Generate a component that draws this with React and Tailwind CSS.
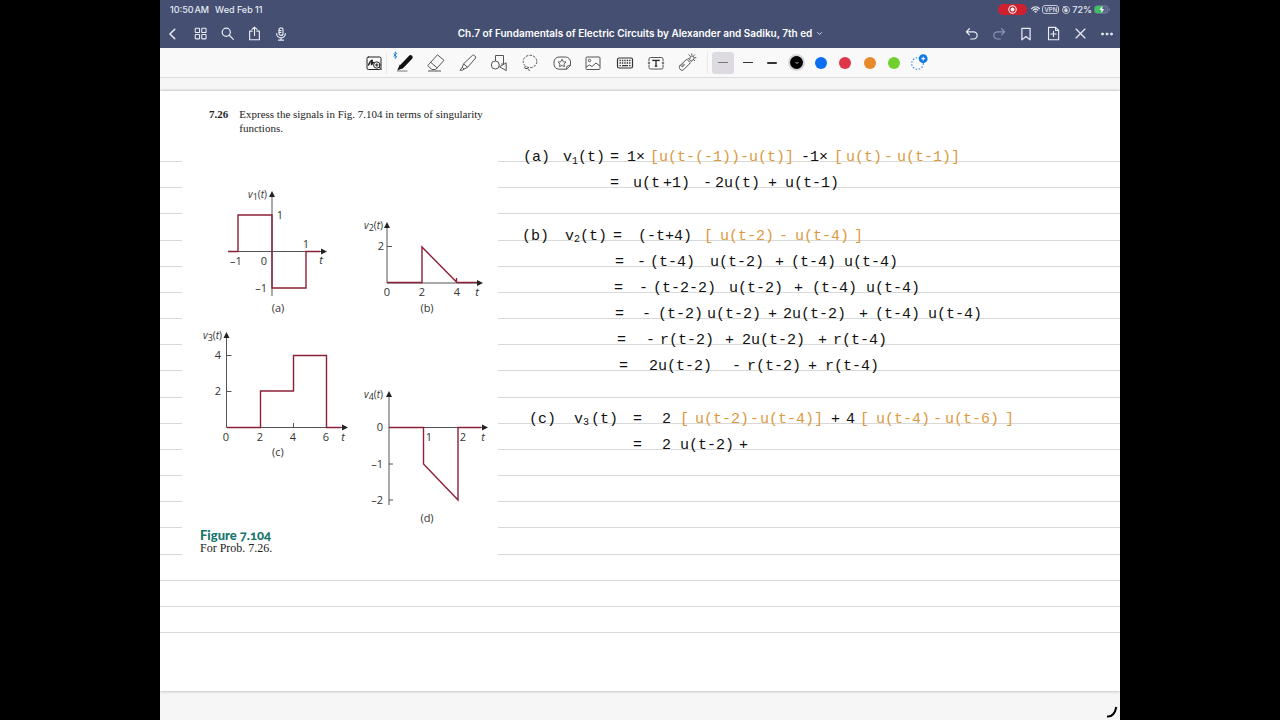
import React from "react";

const TITLE = "Ch.7 of Fundamentals of Electric Circuits by Alexander and Sadiku, 7th ed";

/* Ink tokens: [start, text, tone, subscript, rest]. Starts are measured from the left edge of the ink area. */
const O = "orange";
const ROWS = [
  [[2, "(a)"], [42, "v", "", "1", "(t)"], [89, "="], [106, "1×"], [129, "[u(t-(-1))-u(t)]", O], [280, "-1×"], [313, "[", O], [325, "u(t)", O], [363, "-", O], [376, "u(t-1)]", O]],
  [[89, "="], [112, "u(t"], [142, "+1)"], [182, "-"], [194, "2u(t)"], [247, "+"], [264, "u(t-1)"]],
  [],
  [[1, "(b)"], [44, "v", "", "2", "(t)"], [92, "="], [117, "(-t+4)"], [183, "[", O], [199, "u(t-2)", O], [258, "-", O], [274, "u(t-4)", O], [333, "]", O]],
  [[94, "="], [116, "-"], [129, "(t-4)"], [189, "u(t-2)"], [254, "+"], [270, "(t-4)"], [323, "u(t-4)"]],
  [[93, "="], [118, "-"], [132, "(t-2-2)"], [208, "u(t-2)"], [273, "+"], [291, "(t-4)"], [345, "u(t-4)"]],
  [[94, "="], [121, "-"], [137, "(t-2)"], [186, "u(t-2)"], [247, "+"], [262, "2u(t-2)"], [338, "+"], [354, "(t-4)"], [407, "u(t-4)"]],
  [[96, "="], [125, "-"], [139, "r(t-2)"], [204, "+"], [221, "2u(t-2)"], [297, "+"], [312, "r(t-4)"]],
  [[98, "="], [128, "2u(t-2)"], [211, "-"], [226, "r(t-2)"], [287, "+"], [304, "r(t-4)"]],
  [],
  [[8, "(c)"], [53, "v", "", "3"], [70, "(t)"], [112, "="], [141, "2"], [159, "[", O], [174, "u(t-2)", O], [229, "-", O], [239, "u(t-4)]", O], [310, "+"], [325, "4"], [339, "[", O], [355, "u(t-4)", O], [412, "-", O], [424, "u(t-6)", O], [484, "]", O]],
  [[112, "="], [141, "2"], [159, "u(t-2)"], [218, "+"]],
  [], [], [], [], [], [], [],
];

function InkRow({ tokens }) {
  return (
    <li className="flex min-h-0 flex-1 items-end whitespace-pre border-b border-[#d9d9d9] pl-[361px] font-['Liberation_Mono',monospace] text-[15px] leading-[6px] text-[#111]">
      {tokens.map(([x, text, tone, sub, rest], i) => {
        const start = i === 0 ? x : 0;
        const next = tokens[i + 1];
        return (
          <span
            key={i}
            className={tone === O ? "shrink-0 text-[#dc9a3e]" : "shrink-0"}
            style={{ marginLeft: start, width: next ? next[0] - x : undefined }}
          >
            {text}
            {sub && <sub className="text-[10px] leading-[0px]">{sub}</sub>}
            {rest}
          </span>
        );
      })}
    </li>
  );
}

function Svg({ size = 16, children, sw = 1.2, className }) {
  return (
    <svg width={size} height={size} viewBox="0 0 16 16" fill="none" stroke="currentColor" strokeWidth={sw} strokeLinecap="round" strokeLinejoin="round" className={className} aria-hidden="true">
      {children}
    </svg>
  );
}

function NavButton({ label, children }) {
  return (
    <button aria-label={label} className="flex h-6 w-[26px] items-center justify-center">
      {children}
    </button>
  );
}

function StatusBar() {
  return (
    <div className="flex h-[19px] items-center justify-between pr-[9px] pl-[10px] font-[Inter,sans-serif] text-[9px] font-medium text-[#e6e9f2]">
      <div className="flex gap-[6px]">
        <span>10:50{"\u200a"}AM</span>
        <span>Wed Feb 11</span>
      </div>
      <div className="flex items-center gap-[2px]">
        <span className="mr-[2px] flex h-[11px] w-[29px] items-center justify-center rounded-full bg-[#d0202f] text-white">
          <Svg size={9} sw={1.8}><circle cx="8" cy="8" r="6.6" /><circle cx="8" cy="8" r="2.6" fill="currentColor" /></Svg>
        </span>
        <Svg size={9} sw={2.2}>
          <path d="M1.2 6.2a10 10 0 0 1 13.6 0M3.8 9.2a6 6 0 0 1 8.4 0" />
          <path d="M8 13.5 6.2 11.6a2.7 2.7 0 0 1 3.6 0Z" fill="currentColor" strokeWidth="1" />
        </Svg>
        <span className="flex h-[9px] w-[17px] items-center justify-center rounded-[3px] border border-[#c3c8d8] text-[6px] leading-none font-medium">VPN</span>
        <Svg size={8} sw={1.6} className="ml-px">
          <path d="M3 3.2A7 7 0 1 0 8 1c-1.500 0-2.800.4-4 1.200M3.700 0v3.400H7" />
          <rect x="5.200" y="7.200" width="5.600" height="4.200" rx=".8" fill="currentColor" strokeWidth=".6" />
          <path d="M6.300 7V6a1.700 1.700 0 0 1 3.400 0v1" strokeWidth="1.200" />
        </Svg>
        <span>72%</span>
        <svg width="17" height="9" viewBox="0 0 17 9" aria-hidden="true">
          <rect x=".5" y=".8" width="13.500" height="7.400" rx="2.400" fill="#59648a" stroke="#8790ab" strokeWidth=".6" />
          <path d="M3 1h6v7H3a2 2 0 0 1-2-2V3a2 2 0 0 1 2-2Z" fill="#35c75a" />
          <path d="M8.800.3 4.800 5h2.500l-.9 3.700L10.600 4H8Z" fill="#fff" stroke="#454f72" strokeWidth=".3" />
          <path d="M15 3.200v2.600a1.400 1.400 0 0 0 0-2.600Z" fill="#8790ab" />
        </svg>
      </div>
    </div>
  );
}

function NavBar() {
  return (
    <nav className="flex h-[29px] items-center text-[#e9ecf5]">
      <div className="flex flex-1 gap-px">
        <NavButton label="Back"><Svg size={14} sw={1.7}><path d="M10 2.500 4.500 8l5.500 5.500" /></Svg></NavButton>
        <NavButton label="Pages">
          <Svg size={13} sw={1.3}><rect x="1.500" y="1.500" width="5.300" height="5.300" rx=".8" /><rect x="9.500" y="1.500" width="5.300" height="5.300" rx=".8" /><rect x="1.500" y="9.300" width="5.300" height="5.300" rx=".8" /><rect x="9.500" y="9.300" width="5.300" height="5.300" rx=".8" /></Svg>
        </NavButton>
        <NavButton label="Search"><Svg size={13} sw={1.5}><circle cx="6.500" cy="6.500" r="5" /><path d="m10.200 10.200 5 5" /></Svg></NavButton>
        <NavButton label="Share"><Svg size={15} sw={1.2}><path d="M5.500 5.500H2.800v9.200h10.400V5.500h-2.700M8 10V1.200M5.300 3.700 8 1.100l2.700 2.600" /></Svg></NavButton>
        <NavButton label="Record"><Svg size={14} sw={1.3}><rect x="5.700" y="1" width="4.600" height="8.600" rx="2.300" /><path d="M3 7.500a5 5 0 0 0 10 0M8 12.500V15M5.200 15h5.600M6 4h2M6 6.200h2" /></Svg></NavButton>
      </div>
      <button className="flex items-center gap-[5px] font-[Inter,sans-serif] text-[10px] font-semibold whitespace-nowrap text-white">
        {TITLE}
        <Svg size={5} sw={2.500}><path d="m2 5 6 6 6-6" /></Svg>
      </button>
      <div className="flex flex-1 justify-end gap-px">
        <NavButton label="Undo"><Svg size={14} sw={1.400}><path d="M5 2 1.600 5.500 5 9M1.800 5.500h8a4 4 0 0 1 0 8.200H6.500" /></Svg></NavButton>
        <NavButton label="Redo"><Svg size={14} sw={1.400} className="text-[#8d95b1]"><path d="M11 2l3.400 3.500L11 9M14.200 5.500h-8a4 4 0 0 0 0 8.200h3.300" /></Svg></NavButton>
        <NavButton label="Bookmark"><Svg size={14} sw={1.400}><path d="M3.300 1.500h9.400v13.200L8 10.800l-4.700 3.900Z" /></Svg></NavButton>
        <NavButton label="Add page"><Svg size={15} sw={1.200}><path d="M2.700 1.500h7.500l3.300 3.300v9.900H2.700ZM10.200 1.500v3.300h3.300M8 5.700v5.600M5.200 8.500h5.600" /></Svg></NavButton>
        <NavButton label="Close tools"><Svg size={13} sw={1.500}><path d="m2.500 2.500 11 11M13.500 2.500l-11 11" /></Svg></NavButton>
        <NavButton label="More"><Svg size={12} sw={1}><g fill="currentColor"><circle cx="2" cy="8" r="1.400" /><circle cx="8" cy="8" r="1.400" /><circle cx="14" cy="8" r="1.400" /></g></Svg></NavButton>
      </div>
    </nav>
  );
}

const TOOLS = [
  ["Pen", (
    <svg width="24" height="24" viewBox="0 0 24 24" fill="none" aria-hidden="true">
      <path d="m17.600 6.200-8.600 9" stroke="#111" strokeWidth="4.200" strokeLinecap="round" />
      <path d="m6.800 13.500 3.500 3.500-6 2.500Z" fill="#111" />
      <path d="M4 20h10.500" stroke="#777" />
      <path d="m.6 2.800 3.200 3-1.600 1.600V.9l1.600 1.500-3.200 3" stroke="#2585d8" strokeWidth="1" />
    </svg>
  )],
  ["Eraser", (
    <svg width="20" height="20" viewBox="0 0 20 20" fill="none" stroke="#555" strokeLinejoin="round" aria-hidden="true">
      <path d="M11.500 1.800 18 7.300l-8.300 9.200H6L1.700 12.600Z" /><path d="m4.700 9.300 6.500 5.600M2 18h13" />
    </svg>
  )],
  ["Highlighter", (
    <svg width="20" height="20" viewBox="0 0 20 20" fill="none" stroke="#555" strokeLinejoin="round" aria-hidden="true">
      <path d="M14.500 2.300c1.300-.8 3.800 1.300 3.100 2.700l-8 9.300-4-3.500ZM5.600 10.800l-1.400 3.500 1.900 1.700 3.500-1.700M4.200 14.300 2 17.300l2.600-.1 1.500-1.200" />
    </svg>
  )],
  ["Shapes", (
    <svg width="20" height="20" viewBox="0 0 20 20" fill="none" stroke="#555" strokeLinejoin="round" aria-hidden="true">
      <path d="M6.500 8V2.500h8V11h-2.300" /><circle cx="6.300" cy="12" r="4" /><path d="m10.500 13.800 6.700-4v7.800Z" />
    </svg>
  )],
  ["Lasso", (
    <svg width="20" height="20" viewBox="0 0 20 20" fill="none" stroke="#555" aria-hidden="true">
      <ellipse cx="10" cy="8.500" rx="6.800" ry="6.200" strokeDasharray="2.500 1.200" /><path d="M5.500 13.200c-1.500 1-1 2.500.5 2.300s3 .3 3.500 2.500" />
    </svg>
  )],
  ["Elements", (
    <svg width="20" height="20" viewBox="0 0 20 20" fill="none" stroke="#555" strokeLinejoin="round" aria-hidden="true">
      <path d="M7 4h6.500a5 5 0 0 1 5 5v3.500L14.500 16.200H7a5 5 0 0 1-5-5V9a5 5 0 0 1 5-5ZM18.500 12.300c-3.300 0-4.200 1-4 3.900" />
      <path d="m10 6.200 1.200 2.500 2.800.4-2 1.900.5 2.700-2.500-1.300-2.500 1.300.5-2.700-2-1.900 2.800-.4Z" strokeWidth=".9" />
    </svg>
  )],
  ["Image", (
    <svg width="18" height="18" viewBox="0 0 18 18" fill="none" stroke="#555" strokeLinejoin="round" aria-hidden="true">
      <rect x="2" y="3" width="14" height="12.500" rx="1" /><circle cx="5.500" cy="6.500" r="1.200" /><path d="m2 13 3.500-2 2.500 1.500 4-3.500 4 3" />
    </svg>
  )],
  ["Keyboard", (
    <svg width="18" height="18" viewBox="0 0 18 18" fill="none" stroke="#333" aria-hidden="true">
      <rect x="1.500" y="4" width="15" height="10" rx="1.500" strokeWidth="1.200" /><path d="M3.500 6.500h11M3.500 9h11" strokeWidth="1.400" strokeDasharray="1.400 1" /><path d="M3.500 11.600h1.400M6 11.600h6M13.100 11.600h1.400" strokeWidth="1.400" />
    </svg>
  )],
  ["Text", (
    <svg width="18" height="18" viewBox="0 0 18 18" fill="none" stroke="#555" aria-hidden="true">
      <path d="M2 7V5a1.500 1.500 0 0 1 1.500-1.500h11A1.500 1.500 0 0 1 16 5v2M2 11v2.500A1.500 1.500 0 0 0 3.500 15h11a1.500 1.500 0 0 0 1.500-1.500V11M2 7.500v3M16 7.500v3M.8 9h2.400M14.800 9h2.400" />
      <path d="M6 7.300V6.300h6v1M9 6.300v5.900M7.700 12.200h2.600" stroke="#222" strokeWidth="1.300" />
    </svg>
  )],
  ["Laser pointer", (
    <svg width="20" height="20" viewBox="0 0 20 20" fill="none" stroke="#555" strokeLinecap="round" strokeLinejoin="round" aria-hidden="true">
      <path d="m3 12.500 6.800-6.300 3.600 3.600-6.600 6.800c-2.600 2-6-1.200-3.800-4.100ZM11 5.200l3.400 3.400M6.300 11.200l-1.800 1.800.9 1 1.900-1.800Z" />
      <path d="M12.800 5.500a2.200 2.200 0 1 1 2 1.900M14.800.8v1.100M18.900 4.700h-1.100M17.700 1.800l-.8.8M11.900 1.800l.8.8M17.700 7.700l-.8-.8" />
    </svg>
  )],
];

const COLORS = [
  ["Blue", "bg-[#0b6ff0]"],
  ["Red", "bg-[#df3548]"],
  ["Orange", "bg-[#e8892a]"],
  ["Green", "bg-[#72cf30]"],
];

function Toolbar() {
  return (
    <div className="flex h-[30px] items-center justify-center border-b border-[#dcdcdc] bg-[#f9f9f9] pl-[13px]">
      <button aria-label="Zoom window" className="flex h-6 w-6 items-center justify-center">
        <svg width="18" height="18" viewBox="0 0 18 18" fill="none" stroke="#222" strokeLinecap="round" aria-hidden="true">
          <rect x="2" y="3" width="14" height="12.500" rx="1.300" />
          <path d="M3.500 11c1.200-2.500 2.300-4.500 3.500-4.700.9 0-1.200 4.200-.4 4.300.8 0 1.200-2.300 1.900-2" strokeWidth="1.500" />
          <circle cx="11.800" cy="11" r="3.200" fill="#f9f9f9" /><path d="m14.100 13.300 2.200 2.200M10.500 11h2.600M11.800 9.700v2.600" />
        </svg>
      </button>
      <span className="mr-[2px] h-[22px] w-px bg-[#e8e8e8]" />
      <div className="flex w-[314px]">
        {TOOLS.map(([label, icon]) => (
          <button key={label} aria-label={label} className="flex h-6 flex-1 items-center justify-center">{icon}</button>
        ))}
      </div>
      <span className="mr-[3px] ml-1 h-[22px] w-px bg-[#e8e8e8]" />
      <div className="flex w-[220px] items-center">
        <button aria-label="Thin stroke" className="flex flex-1 justify-center">
          <span className="flex h-[22px] w-[22px] items-center justify-center rounded-[3px] bg-[#dddbe1]"><span className="h-px w-[10px] bg-[#777]" /></span>
        </button>
        <button aria-label="Medium stroke" className="flex h-6 flex-1 items-center justify-center"><span className="h-px w-[10px] bg-[#333]" /></button>
        <button aria-label="Thick stroke" className="flex h-6 flex-1 items-center justify-center"><span className="h-[2px] w-[10px] rounded-full bg-[#333]" /></button>
        <button aria-label="Black" className="flex flex-1 justify-center">
          <span className="flex h-[17px] w-[17px] items-center justify-center rounded-full bg-[#d6d6d6]">
            <span className="flex h-[13px] w-[13px] items-center justify-center rounded-full bg-black text-white"><Svg size={4} sw={3}><path d="m3 5 5 5 5-5" /></Svg></span>
          </span>
        </button>
        {COLORS.map(([label, bg]) => (
          <button key={label} aria-label={label} className="flex flex-1 justify-center"><span className={"h-3 w-3 rounded-full " + bg} /></button>
        ))}
        <button aria-label="Add colour" className="flex flex-1 justify-center">
          <svg width="18" height="18" viewBox="0 0 18 18" fill="none" aria-hidden="true">
            <circle cx="7.500" cy="9.500" r="5.800" stroke="#3d8ee8" strokeWidth="1.200" strokeDasharray="1.500 1.600" />
            <circle cx="13.200" cy="4.700" r="4.400" fill="#1279e0" /><path d="M13.200 2.700v4M11.200 4.700h4" stroke="#fff" />
          </svg>
        </button>
      </div>
    </div>
  );
}

function AxisName({ x, y, n }) {
  return (
    <text x={x} y={y} textAnchor="end" fontSize="10">
      <tspan fontStyle="italic">v</tspan><tspan dy="2" fontSize="9">{n}</tspan><tspan dy="-2">(</tspan><tspan fontStyle="italic">t</tspan>)
    </text>
  );
}

function Arrow({ x, y, up }) {
  return <path d={up ? `M${x} ${y}l-3 6h6Z` : `M${x} ${y}l-6 -3v6Z`} fill="#222" stroke="none" />;
}

function Labels({ items }) {
  return items.map(([x, y, t, anchor]) => (
    <text key={`${x}-${y}`} x={x} y={y} textAnchor={anchor || "middle"} fontStyle={t === "t" ? "italic" : undefined}>{t}</text>
  ));
}

function Plots() {
  return (
    <svg viewBox="182 185 316 340" className="mt-[50px] block h-[340px] w-full" fill="none" role="img" aria-label="Signals v1 to v4">
      <g stroke="#555" strokeWidth="1">
        <path d="M272 197V296M228 251.500H322" />
        <path d="M387 226V283H478M387 246.500h5" />
        <path d="M226.500 338V427.500H343M226.500 355.500h5M226.500 391.500h5M293.500 423v5" />
        <path d="M389 396V505M389 427.500H482M389 464h4M389 500h4" />
      </g>
      <g stroke="#8c2038" strokeWidth="1.400">
        <path d="M228 251.500h10V215h34v73h34v-36.500h14" />
        <path d="M387 282.500h35V247l35 35.500h20M456.500 278v4.500" />
        <path d="M227 427.500h33.500V391H293.500V355.500h33v72H341" />
        <path d="M389 427.500h34.500V464L458 500v-72.500h23" />
      </g>
      <Arrow x={272} y={191} up /><Arrow x={327} y={251.5} />
      <Arrow x={387} y={222} up /><Arrow x={483} y={283} />
      <Arrow x={226.5} y={332} up /><Arrow x={348} y={427.5} />
      <Arrow x={389} y={391} up /><Arrow x={488} y={427.5} />
      <g fill="#333" fontFamily="'Open Sans', sans-serif" fontSize="11">
        <AxisName x={267} y={198} n="1" />
        <AxisName x={383} y={229} n="2" />
        <AxisName x={222} y={339} n="3" />
        <AxisName x={383} y={398} n="4" />
        <Labels items={[[280, 219, "1"], [306, 248, "1"], [236, 265, "–1"], [264, 265, "0"], [321, 264, "t"], [267, 292, "–1", "end"], [278, 312, "(a)"]]} />
        <Labels items={[[381, 250, "2"], [387, 296, "0"], [422, 296, "2"], [457, 296, "4"], [477, 296, "t"], [427, 312, "(b)"]]} />
        <Labels items={[[218, 359, "4"], [218, 395, "2"], [226, 441, "0"], [260, 441, "2"], [293, 441, "4"], [326, 441, "6"], [343, 441, "t"], [278, 456, "(c)"]]} />
        <Labels items={[[380, 431, "0"], [383, 468, "–1", "end"], [383, 504, "–2", "end"], [429, 441, "1"], [463, 441, "2"], [483, 441, "t"], [427, 522, "(d)"]]} />
      </g>
    </svg>
  );
}

function Problem() {
  return (
    <figure className="absolute top-0 left-[22px] w-[316px] bg-white pt-4 pb-2 font-['Liberation_Serif',serif] text-[#222]">
      <div className="flex gap-[11px] pl-[27px] text-[11px] leading-[14px]">
        <strong>7.26</strong>
        <p>Express the signals in Fig. 7.104 in terms of singularity<br />functions.</p>
      </div>
      <Plots />
      <figcaption className="mt-1 pl-[18px] text-[12px] leading-[13px]">
        <span className="block font-[Lato,sans-serif] text-[13px] font-black text-[#17756b] oldstyle-nums">Figure 7.104</span>
        For Prob. 7.26.
      </figcaption>
    </figure>
  );
}

export default function App() {
  return (
    <div className="min-h-screen bg-black">
      <div className="mx-auto flex h-screen w-3/4 flex-col overflow-hidden bg-[#f6f6f6]">
        <header className="bg-[#454f72]">
          <StatusBar />
          <NavBar />
        </header>
        <Toolbar />
        <main className="relative mt-[13px] flex min-h-0 flex-1 flex-col bg-white pt-[45px] pb-[58px] shadow-[0_0_3px_rgba(0,0,0,0.35)]">
          <ol className="flex min-h-0 flex-1 flex-col">
            {ROWS.map((tokens, i) => <InkRow key={i} tokens={tokens} />)}
          </ol>
          <Problem />
        </main>
        <footer className="flex h-[29px] items-end justify-end pr-[2px] pb-[2px]">
          <svg width="12" height="12" viewBox="0 0 12 12" fill="none" aria-hidden="true">
            <path d="M1 10.500c5 .5 8-3 9.300-9.500" stroke="#000" strokeWidth="2" />
          </svg>
        </footer>
      </div>
    </div>
  );
}
